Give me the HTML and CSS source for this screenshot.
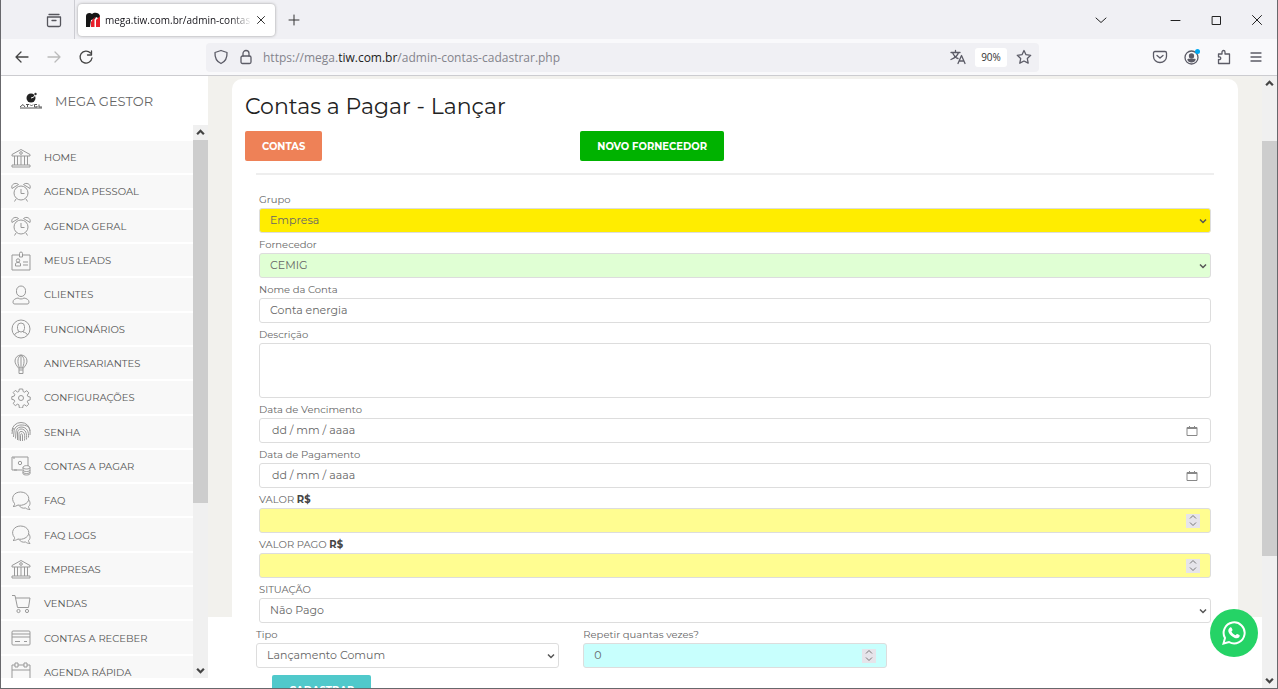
FILE: index.html
```html
<!DOCTYPE html>
<html lang="pt-BR">
<head>
<meta charset="utf-8">
<title>Contas a Pagar - Lançar</title>
<link rel="stylesheet" href="styles.css">
</head>
<body>
<svg class="defs" aria-hidden="true">
  <symbol id="bank" viewBox="0 0 20 20"><path d="M1 6.500 10 1.500l9 5v1.500H1zM1 17h18v2H1zM3.500 8v9M6.500 8v9M10 8v9M13.500 8v9M16.500 8v9"/><circle cx="10" cy="5" r="1.300"/></symbol>
  <symbol id="clock" viewBox="0 0 20 20"><circle cx="10" cy="11" r="7"/><path d="M10 7v4.500h3.500M1 6.500C-.5 2 5 0 7.500 2.500L1 6.500M19 6.500C20.500 2 15 0 12.500 2.500L19 6.500M5 17l-1.500 2.500M15 17l1.500 2.500"/></symbol>
  <symbol id="badge" viewBox="0 0 20 20"><path d="M8 4H1v15h18V4h-7M8.500 6V2.500a1.500 1.500 0 0 1 3 0V6zM4.500 15v-2c0-1 1-1.500 2.500-1.500s2.500.5 2.500 1.500v2zM12 11h5M12 14h5"/><circle cx="7" cy="9.500" r="1.700"/></symbol>
  <symbol id="person" viewBox="0 0 20 20"><rect x="5.500" y="1" width="9" height="10.500" rx="4.500"/><path d="M2 17c0-2.500 2.500-3.500 5-4 1.500 1.300 4.500 1.300 6 0 2.500.5 5 1.500 5 4 0 1.500-.5 2-2 2H4c-1.500 0-2-.5-2-2z"/></symbol>
  <symbol id="user" viewBox="0 0 20 20"><circle cx="10" cy="10" r="9"/><rect x="6.500" y="4" width="7" height="9" rx="3.500"/><path d="M3.500 16c.5-1.500 2-2.500 4.500-3v-1M16.500 16c-.5-1.500-2-2.500-4.500-3v-1"/></symbol>
  <symbol id="balloon" viewBox="0 0 20 20"><path d="M7.500 14C5.500 11.500 4 9.500 4 7a6 6 0 0 1 12 0c0 2.500-1.500 4.500-3.500 7zM8.500 14C6 8 6.500 3 10 1c3.500 2 4 7 1.500 13M10 1v13M8 16h4v3.500H8zM8 14v2M12 14v2"/></symbol>
  <symbol id="gear" viewBox="0 0 20 20"><path d="M8.300 1h3.400l.5 2.600 1.300.6 2.300-1.500 2 2.200-1.500 2.200.6 1.400 2.300.5v2.900l-2.400.6-.5 1.400 1.500 2.200-2.100 2.100-2.200-1.400-1.400.6-.5 2.600H8.400L7.900 16.800l-1.400-.6-2.200 1.400-2.100-2.100 1.500-2.200-.6-1.400L.8 11.400V8.700l2.400-.6.6-1.400-1.600-2.200 2.100-2.100 2.200 1.600 1.300-.5z"/><circle cx="10" cy="10" r="2.500"/></symbol>
  <symbol id="finger" viewBox="0 0 20 20"><path d="M1 9a9 8.500 0 0 1 18 0M1 12a9 8.500 0 0 1 2-6M19 13c1-9-4-10-9-10-4 0-7 3-7 7l-.5 5M17.500 15.500C18 10 16 5 10 5c-3.500 0-5 3-5 5l-.5 6.500M15.500 17.500C16 12 15 7 10 7c-2.500 0-3.500 2-3.500 4v7M13.500 18.500c.5-5 .5-9-3.500-9-2 0-2 2-2 3v6M11.500 19v-5c0-3-2-3-2-.5V19"/></symbol>
  <symbol id="money" viewBox="0 0 20 20"><path d="M11 14H1V1h16v9M3 14h3M3 1v2"/><circle cx="9" cy="7" r="1.700"/><path d="M12 11.500c0-2.500 7-2.500 7 0v6c0 2-7 2-7 0zM12 11.500c0 2 7 2 7 0M12 14c0 2 7 2 7 0M12 16c0 2 7 2 7 0"/></symbol>
  <symbol id="chat" viewBox="0 0 20 20"><path d="M3.500 12.500C-1 7 3 1 9.500 1c8 0 11 8 5.500 11.500-3 2-6 2-8 1.500-1.500 1-3 1.500-5 1.500 1.500-1 1.800-2 1.500-3zM17.500 8.500c2.500 3 1.500 6 0 7 0 1 .5 2 1.500 3-2 0-3-.5-4.500-1.500-3 .7-5-.5-6.500-2.500"/></symbol>
  <symbol id="cart" viewBox="0 0 20 20"><path d="M1 1.500h3l2.500 12h11L19 4H4.500"/><circle cx="7.500" cy="17" r="1.600"/><circle cx="16" cy="17" r="1.600"/></symbol>
  <symbol id="card" viewBox="0 0 20 20"><rect x="1" y="3" width="18" height="14" rx="1"/><path d="M1 6h18M1 9h18M4 13.500h5M13 13.500h3"/></symbol>
  <symbol id="calendar" viewBox="0 0 20 20"><path d="M1 20V3h18v17M1 8h18"/><path class="knob" d="M4 1h3v4H4zM13 1h3v4h-3z"/></symbol>
  <symbol id="chevron" viewBox="0 0 8 6"><path d="m1 1.500 3 3 3-3"/></symbol>
  <symbol id="date" viewBox="0 0 12 12"><path d="M1 2.500h10v8H1zM1 3.500h10M3.500 1v2M8.500 1v2"/></symbol>
</svg>

<header class="tabs">
  <button class="recent" aria-label="Abas recentes"><svg class="ico" viewBox="0 0 16 16"><path d="M3 2.500h10M1.500 5h13v8c0 1-.5 1.500-1.500 1.500H3c-1 0-1.500-.5-1.500-1.500zM6 8.500h4"/></svg></button>
  <div class="tab">
    <svg class="fav" viewBox="0 0 16 16" aria-hidden="true"><path d="M1 15V4c0-3 4-4 6-2 2-2 7-2 8 2v3l-4-2-1 2-4 1-1 7z" fill="#151515"/><path d="M6 15V10l3.500-5v10zM11 15V8l4-4v11z" fill="#e8202b"/></svg>
    <span class="tab-text">mega.tiw.com.br/admin-contas</span>
    <button aria-label="Fechar aba"><svg class="ico close" viewBox="0 0 10 10"><path d="m1.500 1.500 7 7m0-7-7 7"/></svg></button>
  </div>
  <button class="new" aria-label="Nova aba"><svg class="ico small" viewBox="0 0 12 12"><path d="M6 1v10M1 6h10"/></svg></button>
  <div class="window">
    <button aria-label="Listar abas"><svg class="ico small" viewBox="0 0 12 12"><path d="m1 4 5 4.500L11 4"/></svg></button>
    <button class="min" aria-label="Minimizar"><svg class="ico small" viewBox="0 0 12 12"><path d="M2 6.500h9"/></svg></button>
    <button aria-label="Maximizar"><svg class="ico small" viewBox="0 0 12 12"><path d="M2.500 2.500h8v8h-8z"/></svg></button>
    <button aria-label="Fechar"><svg class="ico small" viewBox="0 0 12 12"><path d="m1.500 1.500 9 9m0-9-9 9"/></svg></button>
  </div>
</header>

<nav class="toolbar">
  <div class="history">
    <button aria-label="Voltar"><svg class="ico" viewBox="0 0 16 16"><path d="M14 8H2M7 3 2 8l5 5"/></svg></button>
    <button class="off" aria-label="Avançar"><svg class="ico" viewBox="0 0 16 16"><path d="M2 8h12M9 3l5 5-5 5"/></svg></button>
    <button aria-label="Recarregar"><svg class="ico" viewBox="0 0 16 16"><path d="M12.500 4A6 6 0 1 0 14 9M13.500 2v4h-4"/></svg></button>
  </div>
  <div class="address">
    <svg class="ico" viewBox="0 0 16 16"><path d="M8 1.500 14 3.500c.3 5-1.500 9-6 11-4.500-2-6.300-6-6-11z"/></svg>
    <svg class="ico" viewBox="0 0 16 16"><rect x="3" y="7" width="10" height="7.500" rx="1.500"/><path d="M5 7V4.500a3 3 0 0 1 6 0V7"/></svg>
    <span class="url">https://mega.<b>tiw.com.br</b>/admin-contas-cadastrar.php</span>
    <svg class="ico" viewBox="0 0 16 16"><path d="M1 3.500h9M5.500 1.500v2M2.500 3.500C4 7 6 9 8 9.500M8.500 3.500C7.500 7 5 9 1 10.500M8 14.500l3.500-8 3.500 8M9.500 12h4"/></svg>
    <button class="zoom">90%</button>
    <svg class="ico" viewBox="0 0 16 16"><path d="m8 1.500 2 4.200 4.700.6-3.400 3.200.9 4.700L8 12l-4.200 2.200.9-4.700L1.300 6.300 6 5.700z"/></svg>
  </div>
  <div class="tools">
    <button aria-label="Pocket"><svg class="ico" viewBox="0 0 16 16"><path d="M3 2.500h10c1 0 1.500.5 1.500 1.500v3.500a6.500 6 0 0 1-13 0V4c0-1 .5-1.500 1.500-1.500zM5 6.500l3 2.500 3-2.500"/></svg></button>
    <button aria-label="Conta"><svg class="ico" viewBox="0 0 16 16"><circle cx="7.500" cy="8.500" r="6.500"/><circle cx="7.500" cy="7" r="2" fill="currentColor"/><path d="M4 10.500h7c-1 3-6 3-7 0z" fill="currentColor"/><circle class="dot" cx="13.500" cy="2.500" r="2.500"/></svg></button>
    <button aria-label="Extensões"><svg class="ico" viewBox="0 0 16 16"><path d="M2.500 14.500v-4c3 1 3-3.500 0-2.500V5H6V3c0-2 3-2 3 0v2h4.500v9.500z"/></svg></button>
    <button aria-label="Menu"><svg class="ico" viewBox="0 0 16 16"><path d="M3 4h10M3 8h10M3 12h10"/></svg></button>
  </div>
</nav>

<div class="page">
  <aside class="sidebar">
    <div class="brand">
      <svg viewBox="0 0 24 18" aria-hidden="true"><circle cx="12" cy="6" r="4.500" fill="#222"/><path d="M12 6q3 0 4-3" stroke="#fff" fill="none"/><circle cx="16.500" cy="2" r="1.200" fill="#333"/><path d="M1 15l3-2.500 2 2.500M7 12.500h3M8.500 12.500V15M11 12.500l1.500 1.500 1.500-1.500M18 12.500h-2.500V15H18v-1M20 12.500V15h3M1 16h22" stroke="#555" fill="none"/></svg>
      <span>MEGA GESTOR</span>
    </div>
    <div class="side-body">
      <ul class="menu">
        <li><a href="#"><svg><use href="#bank"/></svg>HOME</a></li>
        <li><a href="#"><svg><use href="#clock"/></svg>AGENDA PESSOAL</a></li>
        <li><a href="#"><svg><use href="#clock"/></svg>AGENDA GERAL</a></li>
        <li><a href="#"><svg><use href="#badge"/></svg>MEUS LEADS</a></li>
        <li><a href="#"><svg><use href="#person"/></svg>CLIENTES</a></li>
        <li><a href="#"><svg><use href="#user"/></svg>FUNCIONÁRIOS</a></li>
        <li><a href="#"><svg><use href="#balloon"/></svg>ANIVERSARIANTES</a></li>
        <li><a href="#"><svg><use href="#gear"/></svg>CONFIGURAÇÕES</a></li>
        <li><a href="#"><svg><use href="#finger"/></svg>SENHA</a></li>
        <li><a href="#"><svg><use href="#money"/></svg>CONTAS A PAGAR</a></li>
        <li><a href="#"><svg><use href="#chat"/></svg>FAQ</a></li>
        <li><a href="#"><svg><use href="#chat"/></svg>FAQ LOGS</a></li>
        <li><a href="#"><svg><use href="#bank"/></svg>EMPRESAS</a></li>
        <li><a href="#"><svg><use href="#cart"/></svg>VENDAS</a></li>
        <li><a href="#"><svg><use href="#card"/></svg>CONTAS A RECEBER</a></li>
        <li><a href="#"><svg><use href="#calendar"/></svg>AGENDA RÁPIDA</a></li>
      </ul>
      <div class="scroll side-scroll" aria-hidden="true">
        <svg class="up"><use href="#chevron"/></svg><span class="thumb"></span><span class="rest"></span><svg><use href="#chevron"/></svg>
      </div>
    </div>
  </aside>

  <main class="main">
    <section class="panel">
      <h1>Contas a Pagar - Lançar</h1>
      <div class="actions">
        <div><button class="btn coral">CONTAS</button></div>
        <div><button class="btn green">NOVO FORNECEDOR</button></div>
      </div>
      <form class="form">
        <div class="fields">
          <label for="grupo">Grupo</label>
          <div class="control"><select id="grupo" class="yellow"><option>Empresa</option></select><svg class="arrow"><use href="#chevron"/></svg></div>
          <label for="fornecedor">Fornecedor</label>
          <div class="control"><select id="fornecedor" class="mint"><option>CEMIG</option></select><svg class="arrow"><use href="#chevron"/></svg></div>
          <label for="nome">Nome da Conta</label>
          <div class="control"><input id="nome" type="text" value="Conta energia"></div>
          <label for="descricao">Descrição</label>
          <div class="control"><textarea id="descricao"></textarea></div>
          <label for="vencimento">Data de Vencimento</label>
          <div class="control"><input id="vencimento" class="date" type="text" placeholder="dd / mm / aaaa"><svg class="picker"><use href="#date"/></svg></div>
          <label for="pagamento">Data de Pagamento</label>
          <div class="control"><input id="pagamento" class="date" type="text" placeholder="dd / mm / aaaa"><svg class="picker"><use href="#date"/></svg></div>
          <label for="valor">VALOR <b>R$</b></label>
          <div class="control"><input id="valor" class="lemon" type="number"><span class="spin"><svg class="up"><use href="#chevron"/></svg><svg><use href="#chevron"/></svg></span></div>
          <label for="pago">VALOR PAGO <b>R$</b></label>
          <div class="control"><input id="pago" class="lemon" type="number"><span class="spin"><svg class="up"><use href="#chevron"/></svg><svg><use href="#chevron"/></svg></span></div>
          <label for="situacao">SITUAÇÃO</label>
          <div class="control"><select id="situacao"><option>Não Pago</option></select><svg class="arrow"><use href="#chevron"/></svg></div>
        </div>
        <div class="columns">
          <div><label for="tipo">Tipo</label>
            <div class="control"><select id="tipo"><option>Lançamento Comum</option></select><svg class="arrow"><use href="#chevron"/></svg></div></div>
          <div><label for="repetir">Repetir quantas vezes?</label>
            <div class="control"><input id="repetir" class="aqua" type="number" value="0"><span class="spin"><svg class="up"><use href="#chevron"/></svg><svg><use href="#chevron"/></svg></span></div></div>
        </div>
        <button class="btn teal" type="submit">CADASTRAR</button>
      </form>
    </section>
    <a class="whats" href="#" aria-label="WhatsApp"><svg viewBox="0 0 24 24"><path d="M1.500 22.500 3 17a10.500 10.500 0 1 1 4 4z" fill="none" stroke="#fff" stroke-width="2"/><path d="M8 6.500c.5-.5 1.300-.4 1.600.2l.9 2c.2.6-.7 1.300-1 1.700.8 1.700 2 2.900 4 3.800.6-.3 1.100-1.500 1.700-1.300l2.200 1.100c.6.4.2 1.700-.3 2.300-1 1.100-2.700 1.200-4.300.6-3-1.100-5-3-6.300-5.800-.6-1.800.1-3.500 1.500-4.600z" fill="#fff"/></svg></a>
  </main>
  <div class="scroll page-scroll" aria-hidden="true">
    <svg class="up"><use href="#chevron"/></svg><span class="gap"></span><span class="thumb"></span><span class="rest"></span><svg><use href="#chevron"/></svg>
  </div>
</div>
</body>
</html>
```
FILE: styles.css
```css
* { box-sizing: border-box; }
body {
  margin: 0;
  height: 100vh;
  display: flex;
  flex-direction: column;
  overflow: hidden;
  border: 1px solid #68686c;
  border-top: 0;
  background: #fff;
  color: #666;
  font-family: Montserrat, Inter, sans-serif;
  font-size: 10px;
}
button { padding: 0; border: 0; background: none; color: inherit; font: inherit; }
svg { display: block; flex: none; }
.defs { display: none; }
.ico { width: 16px; height: 16px; fill: none; stroke: currentColor; stroke-width: 1.3; stroke-linejoin: round; stroke-linecap: round; }
.small { width: 12px; height: 12px; stroke-width: 1; }
.close { width: 10px; height: 10px; stroke-width: 1; }

/* Browser chrome */
.tabs {
  flex: none;
  height: 39px;
  display: flex;
  align-items: center;
  background: #f0f0f4;
  color: #333;
  font-family: "Segoe UI", "Open Sans", sans-serif;
  font-size: 11px;
}
.recent { width: 74px; height: 39px; padding-left: 45px; border-right: 1px solid #ccccd2; color: #55555c; }
.tab {
  width: 197px;
  height: 32px;
  margin-left: 3px;
  padding: 0 9px 0 7px;
  display: flex;
  align-items: center;
  gap: 4px;
  border-radius: 4px;
  background: #fff;
  box-shadow: 0 0 3px #999;
}
.fav { width: 16px; height: 16px; }
.tab-text {
  flex: 1;
  overflow: hidden;
  white-space: nowrap;
  color: #15141a;
  font-size: 10px;
  -webkit-mask-image: linear-gradient(90deg, #000 85%, transparent);
  mask-image: linear-gradient(90deg, #000 85%, transparent);
}
.new { margin-left: 13px; }
.window { margin-left: auto; padding-right: 14px; display: flex; gap: 29px; color: #222; }
.min { margin-left: 33px; }
.toolbar {
  flex: none;
  height: 37px;
  display: flex;
  align-items: center;
  border-bottom: 1px solid #ccccd0;
  background: #f9f9fb;
  color: #5b5b66;
}
.history { width: 205px; padding-left: 13px; display: flex; gap: 16px; color: #444; }
.off { color: #bbb; }
.address {
  flex: 0 1 833px;
  height: 29px;
  padding: 0 7px;
  display: flex;
  align-items: center;
  gap: 9px;
  border-radius: 4px;
  background: #f0f0f4;
  font-family: "Segoe UI", "Open Sans", sans-serif;
  font-size: 12px;
}
.url { flex: 1; color: #84848c; }
.url b { color: #222; font-weight: 400; }
.zoom { width: 32px; height: 19px; border-radius: 3px; background: #fff; color: #333; font-size: 10px; }
.tools { margin-left: auto; padding-right: 13px; display: flex; gap: 16px; }
.dot { fill: #00a8f0; stroke: none; }

/* Sidebar */
.page { flex: 1; min-height: 0; display: flex; }
.sidebar { flex: none; width: 207px; display: flex; flex-direction: column; padding-bottom: 10px; }
.brand { height: 49px; padding-left: 18px; display: flex; align-items: center; gap: 12px; font-size: 13px; }
.brand svg { width: 24px; height: 18px; }
.side-body { flex: 1; min-height: 0; display: flex; overflow: hidden; }
.menu {
  flex: 1;
  margin: 16px 0 -12px;
  padding: 0;
  display: grid;
  grid-auto-rows: 1fr;
  list-style: none;
}
.menu li { border-bottom: 2px solid #fff; background: #f8f8f8; }
.menu a {
  height: 100%;
  padding: 1px 0 0 10px;
  display: flex;
  align-items: center;
  gap: 13px;
  color: #555;
  text-decoration: none;
}
.menu svg { width: 20px; height: 20px; fill: none; stroke: #999; stroke-width: 1; }
.knob { fill: #f8f8f8; }

/* Scrollbars */
.scroll { flex: none; width: 15px; display: flex; flex-direction: column; background: #f0f0f0; }
.scroll svg { width: 15px; height: 15px; padding: 3px; fill: none; stroke: #444; stroke-width: 2; }
.up { transform: rotate(180deg); }
.thumb { background: #cdcdcd; }
.side-scroll .thumb { flex: 363; }
.side-scroll .rest { flex: 160; }
.page-scroll .gap { flex: 50; }
.page-scroll .thumb { flex: 415; }
.page-scroll .rest { flex: 117; }

/* Main form */
.main {
  position: relative;
  flex: 1;
  min-width: 0;
  padding: 3px 24px 0;
  overflow: hidden;
  background: linear-gradient(#f2f1ed, #f2f1ed) top / 100% calc(100% - 71px) no-repeat #fff;
}
.panel { min-height: 100%; border-radius: 10px 10px 0 0; background: #fff; }
h1 { margin: 0; padding: 11px 13px 7px; color: #222; font-size: 22px; font-weight: 400; line-height: 34px; }
.actions { display: grid; grid-template-columns: repeat(3, 1fr); }
.actions div { padding: 0 13px; }
.btn { height: 30px; padding: 0 17px; border-radius: 2px; color: #fff; font-size: 10px; font-weight: 700; }
.coral { background: #ee8157; }
.green { background: #00b200; }
.teal { margin: 7px 0 0 16px; background: #50c9cb; }
.form { margin: 12px 24px 0; border-top: 2px solid #eee; }
.fields { padding: 13px 3px 0; }
label { display: block; padding-top: 3px; line-height: 17px; }
label b { color: #444; }
.control { display: grid; align-items: center; }
.control > * { grid-area: 1 / 1; }
input, select, textarea {
  width: 100%;
  height: 25px;
  margin: 0;
  padding: 0 10px 2px;
  border: 1px solid #ddd;
  border-radius: 3px;
  outline: 0;
  background: #fff;
  color: #666;
  font: inherit;
  font-size: 11px;
  appearance: none;
}
textarea { height: 55px; resize: none; }
.date { padding-left: 12px; }
input::placeholder { color: #666; opacity: 1; }
input::-webkit-inner-spin-button { appearance: none; }
.yellow { background: #ffed00; }
.mint { background: #e0ffd4; }
.lemon { background: #fffd91; }
.aqua { background: #c8fffd; }
.arrow, .picker, .spin { justify-self: end; pointer-events: none; fill: none; stroke: #555; }
.arrow { width: 8px; height: 6px; margin-right: 4px; stroke-width: 1.5; }
.picker { width: 12px; height: 12px; margin-right: 13px; stroke: #888; }
.spin { width: 14px; height: 14px; margin-right: 11px; display: grid; place-items: center; background: #e6e4ea; stroke: #777; }
.spin svg { width: 8px; height: 6px; }
.columns { display: grid; grid-template-columns: repeat(3, 1fr); gap: 24px; }
.whats {
  position: absolute;
  right: 4px;
  bottom: 31px;
  width: 48px;
  height: 48px;
  display: grid;
  place-items: center;
  border-radius: 50%;
  background: #25d366;
}
.whats svg { width: 24px; height: 24px; }
```
